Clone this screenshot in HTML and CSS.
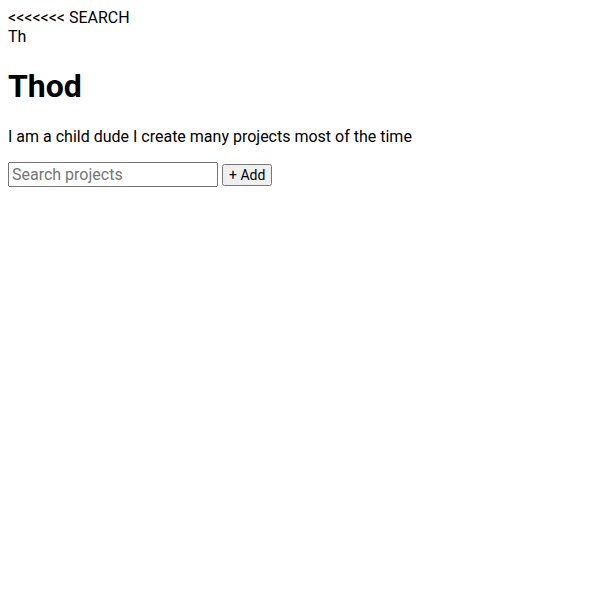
FILE: index.html
```html
<!DOCTYPE html>
<html>
<head>
<meta charset="utf-8">
<link rel="stylesheet" href="styles.css">
</head>
<body>
<div class="conflict">&lt;&lt;&lt;&lt;&lt;&lt;&lt; SEARCH<br>Th</div>
<h1 class="title">Thod</h1>
<p class="bio">I am a child dude I create many projects most of the time</p>
<div class="controls">
<input class="search" type="text" placeholder="Search projects">
<button class="add">+ Add</button>
</div>
</body>
</html>
```
FILE: styles.css
```css
body {
  font-family: Roboto, "Liberation Sans", sans-serif;
  font-size: 16px;
  margin: 8px;
  color: #000;
}
.title {
  font-size: 32px;
  margin: 21px 0 22px;
}
.bio {
  margin: 16px 0;
}
.search {
  font-family: Roboto, "Liberation Sans", sans-serif;
  font-size: 16px;
  width: 202px;
}
.add {
  font-family: Roboto, "Liberation Sans", sans-serif;
  font-size: 14px;
  padding: 1px 5px;
}
```
